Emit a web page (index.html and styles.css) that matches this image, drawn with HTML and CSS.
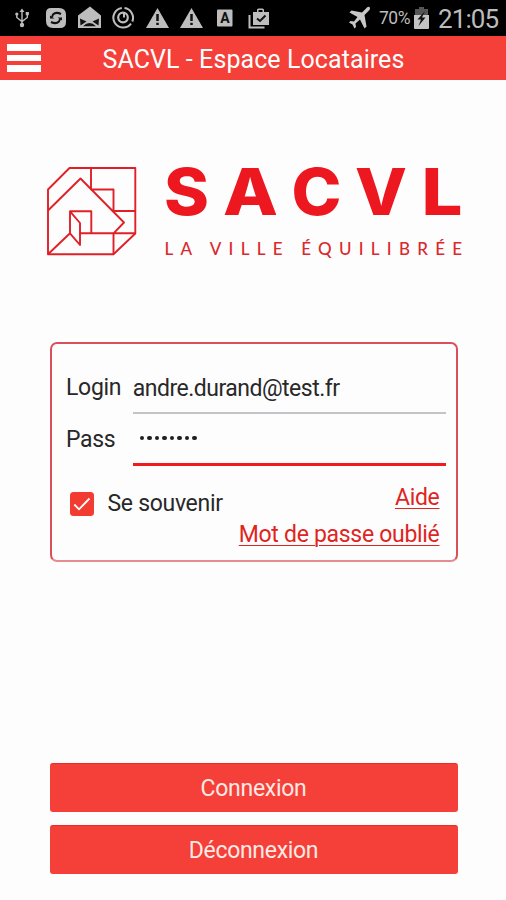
FILE: index.html
```html
<!DOCTYPE html>
<html lang="fr">
<head>
<meta charset="utf-8">
<title>SACVL - Espace Locataires</title>
<link rel="stylesheet" href="styles.css">
</head>
<body>
<div class="status">
  <svg class="notices" width="260" height="36" viewBox="14 0 260 36">
    <g fill="none" stroke="#bdbdbd" stroke-width="1.4">
      <path d="M22 10V25M16.800 14.500V17.500L22 21.500L27.300 17.500V14"/>
    </g>
    <g fill="#bdbdbd">
      <path d="M19.500 12L22 8.500L24.500 12Z"/>
      <circle cx="22" cy="25" r="2.200"/><circle cx="16.800" cy="14" r="1.600"/><path d="M25.700 12h3.200v3.200h-3.200z"/>
      <path d="M51 8H59Q66 8 66 15V22Q66 28 60 28H53Q46 28 46 21V13Q46 8 51 8Z"/>
      <path d="M78 15.500L90 6.500L101 15.500V28H78Z"/>
      <path d="M157.500 8L169 28H146Z"/>
      <path d="M191.500 8L203 28H180Z"/>
      <rect x="217" y="9.500" width="15.500" height="17" rx="1"/>
      <path d="M253 12H257V10Q257 8.500 258.500 8.500H262.500Q264 8.500 264 10V12H269V25H253ZM258.500 12H262.500V10H258.500Z" fill-rule="evenodd"/>
    </g>
    <g fill="none" stroke="#111" stroke-width="2">
      <path d="M61 14Q56 11.500 53 14.500L52 17M51 22Q56 24.500 59 21.500L60 19"/>
      <path d="M50 15.500V18.500H54.500ZM62 20.500V17.500H57.500Z" fill="#111" stroke="none"/>
      <path d="M80 18.500L86.500 21.500L80.500 25.500ZM99 18.500L92.500 21.500L98.500 25.500ZM83 26.300Q89.500 19.500 96 26.300Z" fill="#111" stroke="none"/>
      <path d="M157.500 14V21M157.500 22.800V25M191.500 14V21M191.500 22.800V25" stroke-width="2.500"/>
      <path d="M257 18.500L260 21L265.500 15.500"/>
    </g>
    <g fill="none" stroke="#bdbdbd" stroke-width="2">
      <path d="M121.800 8.100A9.800 9.800 0 1 0 131 23.700M124.500 8.100A9.800 9.800 0 0 1 132.300 21.500"/>
      <circle cx="123" cy="17.500" r="4.800" stroke-width="2.200"/><path d="M124 13V17.500"/>
      <path d="M249.500 15V27.500H264.500"/>
    </g>
    <text x="224.700" y="22.500" class="keycap">A</text>
  </svg>
  <svg class="plane" width="23" height="24" viewBox="0 0 23 24"><path fill="#c8c8c8" d="M21.500 1Q23 3 20 5.500L16.500 9L18.500 20.500L16.500 22.500L12 13.500L7.500 17.500L8 21L6.500 22.500L4.500 18.500L1 16.500L2.500 15L6 15.500L9.500 11L1.500 6.500L3.500 4.500L14 6.500L17.500 3Q20 0 21.500 1Z"/></svg>
  <span class="percent">70%</span>
  <svg class="battery" width="15" height="24" viewBox="0 0 15 24"><path fill="#555" d="M5 1H10V3H14V9H1V3H5Z"/><path fill="#c4c4c4" d="M0 9H15V22Q15 23 14 23H1Q0 23 0 22Z"/><path fill="#111" d="M11 5L3.500 13.500H7L4.500 20L11.500 11.500H8Z"/></svg>
  <span class="clock">21:05</span>
</div>
<header class="bar">
  <div class="menu"><i></i><i></i><i></i></div>
  <h1>SACVL - Espace Locataires</h1>
</header>
<main>
  <svg class="logo" width="428" height="134" viewBox="46 145 428 134">
    <g fill="none" stroke="#df2027" stroke-width="1.900" stroke-linejoin="round">
      <path d="M69.500 168H135.300V233.500L113.500 254.300H48V189.500Z"/>
      <path d="M48 210.500L80.500 178.500L124 222.500L113.500 233.300V254.300M91 168V189.500H113.500V211H135.300M48 254.300L70 233.300V211.300H91.300V233.300M80 233.300H135.300M70 211.300L80 223V245L70 233.300"/>
    </g>
    <g class="brand">
      <text x="164" y="214.700" textLength="45" lengthAdjust="spacingAndGlyphs">S</text>
      <text x="223" y="214.700" textLength="55" lengthAdjust="spacingAndGlyphs">A</text>
      <text x="291.500" y="214.700" textLength="50" lengthAdjust="spacingAndGlyphs">C</text>
      <text x="355" y="214.700" textLength="52" lengthAdjust="spacingAndGlyphs">V</text>
      <text x="421.500" y="214.700" textLength="41" lengthAdjust="spacingAndGlyphs">L</text>
    </g>
    <text class="tagline" x="164.500" y="255" textLength="297.500">LA VILLE ÉQUILIBRÉE</text>
  </svg>
  <form class="card">
    <div class="row"><label>Login</label><div class="field login">andre.durand@test.fr</div></div>
    <div class="row"><label>Pass</label><div class="field pass"><i></i><i></i><i></i><i></i><i></i><i></i><i></i><i></i></div></div>
    <div class="options">
      <div class="remember">
        <svg width="24" height="24" viewBox="0 0 24 24"><rect width="24" height="24" rx="3.500" fill="#f23c32"/><path d="M4.300 12.500L9 17.300L19.500 6.500" fill="none" stroke="#fff" stroke-width="1.800"/></svg>
        <span>Se souvenir</span>
      </div>
      <div class="links"><a>Aide</a><a>Mot de passe oublié</a></div>
    </div>
  </form>
  <div class="actions"><div class="button">Connexion</div><div class="button">Déconnexion</div></div>
</main>
</body>
</html>
```
FILE: styles.css
```css
* { box-sizing: border-box; }
body { margin: 0; width: 506px; height: 900px; overflow: hidden; background: #fefdfe; font-family: Roboto, sans-serif; font-size: 23px; letter-spacing: -0.300px; color: #282828; }
.status { height: 36px; background: #000; display: flex; align-items: center; padding-left: 14px; color: #bcbcbc; }
.plane { margin-left: 74px; }
.keycap { font: bold 14px Roboto, sans-serif; fill: #111; text-anchor: middle; }
.percent { width: 34px; margin-left: 8px; font-size: 17.500px; letter-spacing: -0.500px; }
.battery { margin-left: 1px; }
.clock { margin-left: 9px; font-size: 26px; line-height: 36px; padding-top: 2px; letter-spacing: -0.900px; }
.bar { height: 44px; background: #f44038; display: flex; align-items: center; padding-left: 7px; }
.menu { width: 34px; display: grid; gap: 4px; }
.menu i { height: 6.500px; background: #fff; }
h1 { margin: 2px 0 0 61.500px; font-size: 25px; font-weight: 400; letter-spacing: 0.080px; color: #fff; white-space: nowrap; }
main { display: flex; flex-direction: column; padding: 65px 0 0 49px; }
.logo { margin-left: -3px; }
.brand { font: 800 65px Inter, sans-serif; letter-spacing: 0; fill: #ed171f; }
.tagline { font: 500 17px Lato, sans-serif; letter-spacing: 0; fill: #d92a2d; }
.card { margin: 62.500px 0 0 0.500px; width: 408px; height: 220px; border: 2px solid #d9505a; border-bottom-color: #e68c90; border-radius: 7px; padding: 18px 10px 0 14.500px; }
.row { display: flex; height: 52px; }
label { width: 67px; line-height: 51px; }
.field { width: 314px; line-height: 53px; border-bottom: 2px solid #c4c3c6; }
.login { letter-spacing: -0.500px; }
.pass { border-bottom: 3px solid #ee1c1c; display: flex; align-items: center; gap: 3px; padding-left: 7px; }
.pass i { width: 4.500px; height: 4.500px; border-radius: 50%; background: #202020; }
.options { display: flex; justify-content: space-between; padding: 13px 6px 0 4px; }
.remember { display: flex; height: 50px; align-items: center; gap: 13.500px; }
.links { display: flex; flex-direction: column; align-items: flex-end; line-height: 37px; color: #e0241e; }
.links a { text-decoration: underline; text-decoration-thickness: 1px; text-underline-offset: 3px; }
.actions { margin: 201px 0 0 0.500px; width: 408px; display: grid; gap: 13px; }
.button { height: 49px; border-radius: 3px; border-top: 1px solid #e92c25; background: #f44038; color: #ffe9e5; text-align: center; line-height: 49px; }
```
